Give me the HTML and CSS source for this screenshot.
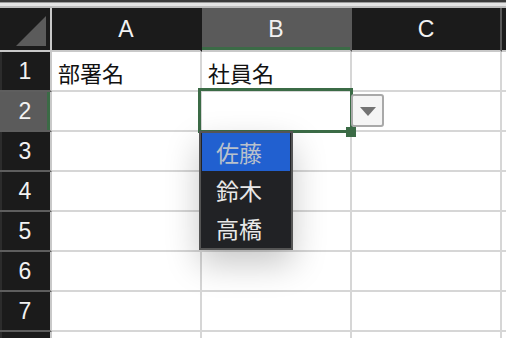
FILE: index.html
```html
<!DOCTYPE html>
<html lang="ja">
<head>
    <meta charset="UTF-8">
    <meta name="viewport" content="width=device-width, initial-scale=1.0">
    <title>入力規則リスト</title>
    <link rel="stylesheet" href="styles.css">
</head>
<body>

    <div class="toolbar-edge"></div>

    <div class="sheet">
        <!-- 見出し行 -->
        <div class="corner"><span class="corner-mark"></span></div>
        <div class="col-head">A</div>
        <div class="col-head active">B</div>
        <div class="col-head last">C</div>
        <div class="col-head"></div>

        <!-- 1行目 -->
        <div class="row-head">1</div>
        <div class="cell">部署名</div>
        <div class="cell">社員名</div>
        <div class="cell"></div>
        <div class="cell"></div>

        <!-- 2行目 (選択中) -->
        <div class="row-head active">2</div>
        <div class="cell"></div>
        <div class="cell current">
            <div class="selection"></div>
            <div class="fill-handle"></div>
            <div class="list-button"><span class="arrow"></span></div>
            <ul class="list">
                <li class="picked">佐藤</li>
                <li>鈴木</li>
                <li>高橋</li>
            </ul>
        </div>
        <div class="cell"></div>
        <div class="cell"></div>

        <div class="row-head">3</div>
        <div class="cell"></div><div class="cell"></div><div class="cell"></div><div class="cell"></div>

        <div class="row-head">4</div>
        <div class="cell"></div><div class="cell"></div><div class="cell"></div><div class="cell"></div>

        <div class="row-head">5</div>
        <div class="cell"></div><div class="cell"></div><div class="cell"></div><div class="cell"></div>

        <div class="row-head">6</div>
        <div class="cell"></div><div class="cell"></div><div class="cell"></div><div class="cell"></div>

        <div class="row-head">7</div>
        <div class="cell"></div><div class="cell"></div><div class="cell"></div><div class="cell"></div>

        <!-- 8行目は画面下端で切れるので番号なし -->
        <div class="row-head"></div>
        <div class="cell"></div><div class="cell"></div><div class="cell"></div><div class="cell"></div>
    </div>

</body>
</html>
```

FILE: styles.css
```css
/* シート全体 */
body { margin: 0; height: 338px; overflow: hidden; background: #fff; font-family: "Noto Sans CJK JP", sans-serif; }
.toolbar-edge { height: 8px; background: linear-gradient(#3a3a3a 0, #3a3a3a 2px, #9c9c9c 2px, #9c9c9c 3px, #e4e4e4 3px, #e4e4e4 6px, #bcbcbc 6px); }
.sheet { display: grid; grid-template-columns: 52px 150px 150px 150px 1fr; grid-template-rows: 44px repeat(8, 40px); }

/* 見出し */
.corner { background: #1b1b1b; border-right: 2px solid #c9c9c9; border-bottom: 2px solid #c9c9c9; display: flex; align-items: flex-end; justify-content: flex-end; padding: 0 4px 4px 0; }
.corner-mark { width: 0; height: 0; border-left: 30px solid transparent; border-bottom: 30px solid #5b5b5b; }
.col-head, .row-head { font-family: "Liberation Sans", Arial, sans-serif; font-size: 23px; color: #f2f2f2; display: flex; align-items: center; justify-content: center; }
.col-head { background: #1b1b1b; border-right: 2px solid #1b1b1b; border-bottom: 2px solid #c9c9c9; }
.col-head.active { background: #5a5a5a; border-right-color: #5a5a5a; box-shadow: inset 0 -3px 0 #3b6b46; }
.col-head.last { border-right-color: #585858; }
.row-head { background: #1b1b1b; border-right: 2px solid #c9c9c9; border-bottom: 2px solid #5e5e5e; box-shadow: inset 2px 0 0 #2c2c2c; }
.row-head.active { background: #5b5b5b; box-shadow: inset -3px 0 0 #3b6b46; }

/* セル */
.cell { border-right: 2px solid #d6d6d6; border-bottom: 2px solid #d6d6d6; font-size: 22px; color: #111; padding: 2px 0 0 6px; line-height: 36px; white-space: nowrap; }
.cell.current { position: relative; }
.selection { position: absolute; left: -4px; top: -4px; width: 155px; height: 45px; box-sizing: border-box; border: 3px solid #3b6b46; }
.fill-handle { position: absolute; left: 144px; top: 35px; width: 10px; height: 10px; background: #3b6b46; }

/* 入力規則ボタン */
.list-button { position: absolute; left: 149px; top: 2px; width: 33px; height: 33px; box-sizing: border-box; border: 2px solid #a9a9a9; border-radius: 3px; background: #f5f5f5; display: flex; align-items: center; justify-content: center; }
.arrow { width: 0; height: 0; border-left: 8px solid transparent; border-right: 8px solid transparent; border-top: 9px solid #737373; margin-top: 2px; }

/* ドロップダウン */
.list { position: absolute; left: -3px; top: 39px; width: 94px; margin: 0; padding: 0 1px 1px; list-style: none; box-sizing: border-box; background: #212225; border: 2px solid #555; box-shadow: 0 14px 34px rgba(0,0,0,0.22); z-index: 2; }
.list li { height: 38px; line-height: 38px; padding-left: 14px; font-size: 23px; color: #e8e8e8; }
.list li.picked { background: #2160d0; color: #b9c1cc; }
```
